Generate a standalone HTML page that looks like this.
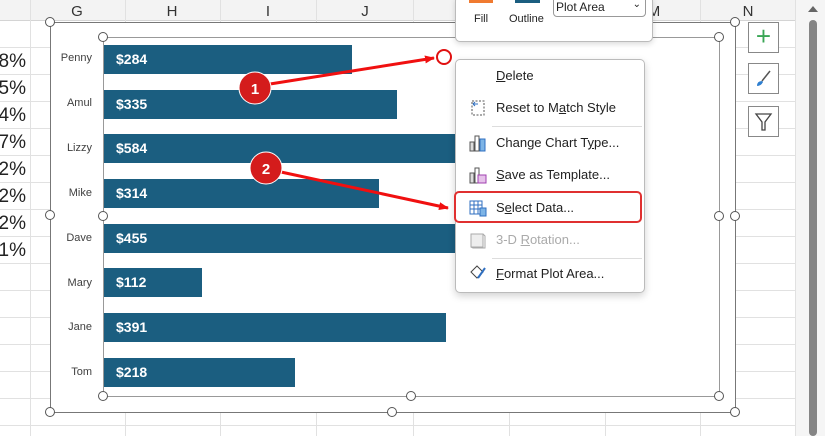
<!DOCTYPE html><html><head><style>
body{margin:0;width:825px;height:436px;overflow:hidden;background:#fff;font-family:"Liberation Sans",sans-serif;position:relative}
.a{position:absolute}
.bar{position:absolute;left:104px;height:29px;background:#1b5e80;color:#fff;font-weight:bold;font-size:14px;line-height:29px;padding-left:12px;box-sizing:border-box}
.lb{position:absolute;right:733px;font-size:11px;color:#404040}
.h{position:absolute;width:8px;height:8px;border:1.5px solid #555;border-radius:50%;background:#fff}
.pc{position:absolute;right:799px;font-size:19px;color:#222}
.mi{position:absolute;left:496px;font-size:13px;color:#222}
.ic{position:absolute;left:469px;width:18px;height:18px}
</style></head><body>
<svg class="a" style="left:0;top:0" width="825" height="436">
<rect x="0" y="0" width="825" height="20" fill="#f3f3f3"/>
<line x1="0" y1="20.5" x2="795" y2="20.5" stroke="#d4d4d4"/>
<g stroke="#e1e1e1">
<line x1="30.5" y1="0" x2="30.5" y2="436"/><line x1="125.5" y1="0" x2="125.5" y2="436"/><line x1="220.5" y1="0" x2="220.5" y2="436"/><line x1="316.5" y1="0" x2="316.5" y2="436"/><line x1="413.5" y1="0" x2="413.5" y2="436"/><line x1="509.5" y1="0" x2="509.5" y2="436"/><line x1="605.5" y1="0" x2="605.5" y2="436"/><line x1="700.5" y1="0" x2="700.5" y2="436"/><line x1="795.5" y1="0" x2="795.5" y2="436"/>
<line x1="0" y1="47.5" x2="795" y2="47.5"/><line x1="0" y1="74.5" x2="795" y2="74.5"/><line x1="0" y1="101.5" x2="795" y2="101.5"/><line x1="0" y1="128.5" x2="795" y2="128.5"/><line x1="0" y1="155.5" x2="795" y2="155.5"/><line x1="0" y1="182.5" x2="795" y2="182.5"/><line x1="0" y1="209.5" x2="795" y2="209.5"/><line x1="0" y1="236.5" x2="795" y2="236.5"/><line x1="0" y1="263.5" x2="795" y2="263.5"/><line x1="0" y1="290.5" x2="795" y2="290.5"/><line x1="0" y1="317.5" x2="795" y2="317.5"/><line x1="0" y1="344.5" x2="795" y2="344.5"/><line x1="0" y1="371.5" x2="795" y2="371.5"/><line x1="0" y1="398.5" x2="795" y2="398.5"/><line x1="0" y1="425.5" x2="795" y2="425.5"/>
</g>
<rect x="796" y="0" width="29" height="436" fill="#f5f5f5"/>
<rect x="809" y="20" width="8" height="416" rx="4" fill="#858585"/>
<path d="M808 12 L813 6 L818 12Z" fill="#666"/>
<g font-size="15" fill="#333" text-anchor="middle"><text x="77" y="16">G</text><text x="172" y="16">H</text><text x="268" y="16">I</text><text x="365" y="16">J</text><text x="654" y="16">M</text><text x="748" y="16">N</text></g>
<rect x="50.5" y="22.5" width="685" height="390" fill="#fff" stroke="#777"/>
<rect x="103.5" y="37.5" width="616" height="359" fill="#fff" stroke="#999"/>
</svg>
<div class="pc" style="top:51px">8%</div><div class="pc" style="top:78px">5%</div><div class="pc" style="top:105px">4%</div><div class="pc" style="top:132px">7%</div><div class="pc" style="top:159px">2%</div><div class="pc" style="top:186px">2%</div><div class="pc" style="top:213px">2%</div><div class="pc" style="top:240px">1%</div>
<div class="bar" style="top:45px;width:248px">$284</div>
<div class="bar" style="top:90px;width:293px">$335</div>
<div class="bar" style="top:134px;width:510px">$584</div>
<div class="bar" style="top:179px;width:275px">$314</div>
<div class="bar" style="top:224px;width:397px">$455</div>
<div class="bar" style="top:268px;width:98px">$112</div>
<div class="bar" style="top:313px;width:342px">$391</div>
<div class="bar" style="top:358px;width:191px">$218</div>
<div class="lb" style="top:52px">Penny</div><div class="lb" style="top:97px">Amul</div><div class="lb" style="top:142px">Lizzy</div><div class="lb" style="top:187px">Mike</div><div class="lb" style="top:232px">Dave</div><div class="lb" style="top:277px">Mary</div><div class="lb" style="top:321px">Jane</div><div class="lb" style="top:366px">Tom</div>
<div class="h" style="left:45px;top:17px"></div><div class="h" style="left:45px;top:210px"></div><div class="h" style="left:45px;top:407px"></div><div class="h" style="left:387px;top:407px"></div><div class="h" style="left:730px;top:407px"></div><div class="h" style="left:730px;top:211px"></div><div class="h" style="left:730px;top:17px"></div>
<div class="h" style="left:98px;top:32px"></div><div class="h" style="left:714px;top:32px"></div><div class="h" style="left:98px;top:211px"></div><div class="h" style="left:714px;top:211px"></div><div class="h" style="left:98px;top:391px"></div><div class="h" style="left:406px;top:391px"></div><div class="h" style="left:714px;top:391px"></div>
<!-- top format panel -->
<div class="a" style="left:455px;top:-4px;width:196px;height:44px;background:#fff;border:1px solid #bbb;border-radius:5px;box-shadow:0 2px 6px rgba(0,0,0,.15)"></div>
<div class="a" style="left:469px;top:0;width:24px;height:3px;background:#f07a30"></div>
<div class="a" style="left:515px;top:0;width:25px;height:3px;background:#1b5e80"></div>
<div class="a" style="left:474px;top:13px;font-size:11px;color:#222">Fill</div>
<div class="a" style="left:509px;top:13px;font-size:11px;color:#222">Outline</div>
<div class="a" style="left:553px;top:-4px;width:93px;height:21px;border:1px solid #999;border-radius:4px;background:#fff;font-size:12px;color:#222;box-sizing:border-box;padding:3px 2px">Plot Area<span style="position:absolute;right:4px;top:2px;font-size:10px">⌄</span></div>
<!-- right buttons -->
<div class="a" style="left:748px;top:22px;width:29px;height:29px;border:1px solid #888;background:#fff;color:#3aa655;font-size:26px;line-height:27px;text-align:center">+</div>
<div class="a" style="left:748px;top:63px;width:29px;height:29px;border:1px solid #888;background:#fff"><svg width="29" height="29"><path d="M21 7 L13 17" stroke="#555" stroke-width="1.5"/><path d="M13 17 Q8 17 8 22 Q12 22 14 18Z" fill="#2f7fd0"/></svg></div>
<div class="a" style="left:748px;top:106px;width:29px;height:29px;border:1px solid #888;background:#fff"><svg width="29" height="29"><path d="M7 7 H22 L16 15 V23 H13 V15Z" fill="none" stroke="#444" stroke-width="1.3"/></svg></div>
<!-- context menu -->
<div class="a" style="left:455px;top:59px;width:188px;height:232px;background:#fff;border:1px solid #bbb;border-radius:5px;box-shadow:0 3px 8px rgba(0,0,0,.18)"></div>
<div class="a" style="left:492px;top:126px;width:150px;height:1px;background:#ddd"></div>
<div class="a" style="left:492px;top:258px;width:150px;height:1px;background:#ddd"></div>
<div class="a" style="left:454px;top:191px;width:188px;height:32px;border:2px solid #e03030;border-radius:5px;box-sizing:border-box"></div>
<div class="mi" style="top:68px"><u>D</u>elete</div>
<div class="mi" style="top:100px">Reset to M<u>a</u>tch Style</div>
<div class="mi" style="top:135px">Change Chart T<u>y</u>pe...</div>
<div class="mi" style="top:167px"><u>S</u>ave as Template...</div>
<div class="mi" style="top:200px">S<u>e</u>lect Data...</div>
<div class="mi" style="top:232px;color:#aaa">3-D <u>R</u>otation...</div>
<div class="mi" style="top:266px"><u>F</u>ormat Plot Area...</div>
<svg class="ic" style="top:99px"><path d="M3 2 H15 V16 H3Z" fill="none" stroke="#555" stroke-dasharray="2 1.5"/><path d="M9 5 H4 M4 5 L6 3 M4 5 L6 7" stroke="#2f6fc0" fill="none"/></svg>
<svg class="ic" style="top:134px"><rect x="1" y="8" width="4" height="9" fill="#ddd" stroke="#555"/><rect x="6" y="2" width="4" height="15" fill="#fff" stroke="#555"/><rect x="11" y="5" width="5" height="12" fill="#7db4e6" stroke="#2f6fc0"/></svg>
<svg class="ic" style="top:166px"><rect x="1" y="7" width="4" height="10" fill="#ddd" stroke="#555"/><rect x="6" y="2" width="4" height="15" fill="#fff" stroke="#555"/><rect x="9" y="9" width="8" height="8" fill="#e6c2ea" stroke="#a040b0"/></svg>
<svg class="ic" style="top:199px"><rect x="1" y="2" width="12" height="13" fill="#fff" stroke="#2f6fc0"/><path d="M1 6 H13 M1 10 H13 M5 2 V15 M9 2 V15" stroke="#2f6fc0"/><rect x="11" y="9" width="6" height="8" fill="#7db4e6" stroke="#2f6fc0"/></svg>
<svg class="ic" style="top:231px"><rect x="2" y="3" width="12" height="13" fill="#eee" stroke="#aaa"/><path d="M14 3 L16 5 V17 H4 L2 16" fill="none" stroke="#aaa"/></svg>
<svg class="ic" style="top:264px"><path d="M2 8 L8 2 L14 8 L8 14Z" fill="none" stroke="#444"/><path d="M16 4 L9 14" stroke="#2f6fc0" stroke-width="2"/></svg>
<!-- annotations -->
<svg class="a" style="left:0;top:0" width="825" height="436">
<defs><marker id="m" markerWidth="10" markerHeight="8" refX="9" refY="4" orient="auto" markerUnits="userSpaceOnUse"><path d="M0 0 L10 4 L0 8Z" fill="#f01010"/></marker></defs>
<line x1="270" y1="84" x2="434" y2="58" stroke="#f01010" stroke-width="3" marker-end="url(#m)"/>
<line x1="281" y1="172" x2="448" y2="208" stroke="#f01010" stroke-width="3" marker-end="url(#m)"/>
<circle cx="444" cy="57" r="7" fill="#fff" stroke="#e01010" stroke-width="2"/>
<circle cx="255" cy="88" r="16" fill="#d41c1c" stroke="#fff" stroke-width="1"/>
<circle cx="266" cy="168" r="16" fill="#d41c1c" stroke="#fff" stroke-width="1"/>
<text x="255" y="94" fill="#fff" font-size="15" font-weight="bold" text-anchor="middle">1</text>
<text x="266" y="174" fill="#fff" font-size="15" font-weight="bold" text-anchor="middle">2</text>
</svg>
</body></html>
